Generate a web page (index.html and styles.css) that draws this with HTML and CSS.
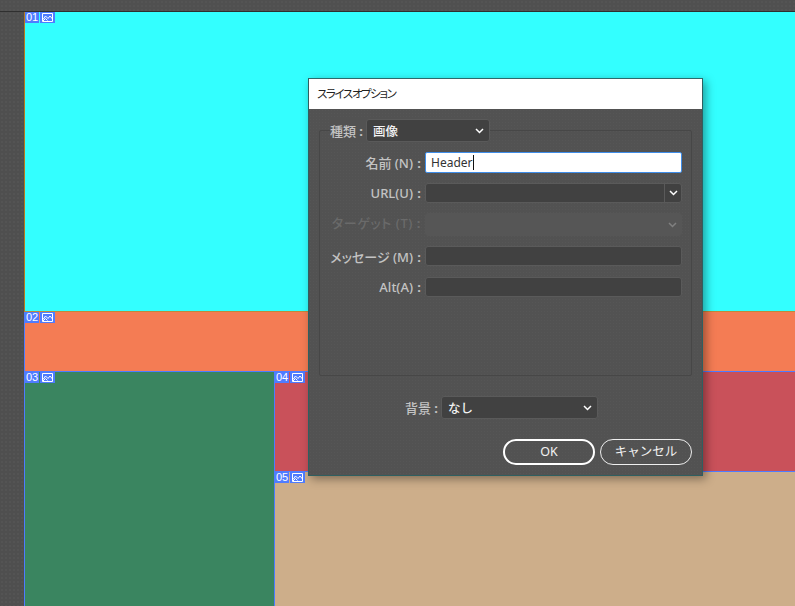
FILE: index.html
```html
<!DOCTYPE html>
<html lang="ja">
<head>
<meta charset="utf-8">
<title>スライスオプション</title>
<link rel="stylesheet" href="styles.css">
</head>
<body>
<svg class="defs" width="0" height="0" aria-hidden="true">
  <symbol id="pic" viewBox="0 0 11 9">
    <path d="M.5.5h10v8H.5z M1 6.5 3.5 3 6 5.5 8 3l2.500 3 M1 8 3.500 5.500 5.500 7.500" fill="none" stroke="#fff" stroke-width="1"/>
  </symbol>
  <symbol id="chev" viewBox="0 0 9 6">
    <path d="M1 1l3.500 3.500L8 1" fill="none" stroke="#fff" stroke-width="1.500"/>
  </symbol>
</svg>
<div class="topbar"></div>
<div class="workspace">
  <div class="gutter"></div>
  <div class="canvas">
    <section class="slice s1 selected">
      <div class="tag"><span class="num">01</span><span class="ico"><svg width="11" height="9"><use href="#pic"/></svg></span></div>
    </section>
    <section class="slice s2">
      <div class="tag"><span class="num">02</span><span class="ico"><svg width="11" height="9"><use href="#pic"/></svg></span></div>
    </section>
    <div class="lower">
      <section class="slice s3">
        <div class="tag"><span class="num">03</span><span class="ico"><svg width="11" height="9"><use href="#pic"/></svg></span></div>
      </section>
      <div class="rightcol">
        <section class="slice s4">
          <div class="tag"><span class="num">04</span><span class="ico"><svg width="11" height="9"><use href="#pic"/></svg></span></div>
        </section>
        <section class="slice s5">
          <div class="tag"><span class="num">05</span><span class="ico"><svg width="11" height="9"><use href="#pic"/></svg></span></div>
        </section>
      </div>
    </div>
  </div>
</div>

<div class="dialog">
  <div class="titlebar">スライスオプション</div>
  <div class="dialog-body">
    <fieldset class="group">
      <legend class="legend">
        <span class="label">種類<b class="colon">:</b></span>
        <span class="select select-type"><span>画像</span><svg width="9" height="6"><use href="#chev"/></svg></span>
      </legend>
      <div class="rows">
        <div class="row r-name"><span class="label">名前 (N)<b class="colon">:</b></span><span class="field focus">Header<i class="caret"></i></span></div>
        <div class="row r-url"><span class="label">URL(U)<b class="colon">:</b></span><span class="field combo"><span class="combo-main"></span><span class="combo-btn"><svg width="9" height="6"><use href="#chev"/></svg></span></span></div>
        <div class="row r-target"><span class="label off">ターゲット (T)<b class="colon">:</b></span><span class="field disabled"><svg width="9" height="6"><use href="#chev"/></svg></span></div>
        <div class="row r-msg"><span class="label">メッセージ (M)<b class="colon">:</b></span><span class="field"></span></div>
        <div class="row r-alt"><span class="label">Alt(A)<b class="colon">:</b></span><span class="field"></span></div>
      </div>
    </fieldset>
    <div class="bg-row">
      <span class="label">背景<b class="colon">:</b></span>
      <span class="select select-bg"><span>なし</span><svg width="9" height="6"><use href="#chev"/></svg></span>
    </div>
    <div class="actions">
      <button class="btn primary">OK</button>
      <button class="btn">キャンセル</button>
    </div>
  </div>
</div>
</body>
</html>
```

FILE: styles.css
```css
* { box-sizing: border-box; }
html, body { margin: 0; height: 100%; }
body {
  overflow: hidden;
  position: relative;
  background: #505050;
  font-family: "Noto Sans", "Noto Sans CJK JP", sans-serif;
}
.defs { position: absolute; }
.topbar {
  height: 12px;
  background-color: #505050;
  background-image: radial-gradient(#545454 0.7px, transparent 0.8px);
  background-size: 4px 4px;
  border-bottom: 1px solid #2f2f2f;
}
.workspace { display: flex; height: 594px; }
.gutter {
  width: 24px;
  flex: none;
  background-color: #4f4f4f;
  background-image: radial-gradient(#545454 0.7px, transparent 0.8px);
  background-size: 4px 4px;
}
.canvas { flex: 1; display: flex; flex-direction: column; }
.slice { position: relative; border-left: 1px solid #4f7cff; }
.s1 { height: 300px; background: #33ffff; border-left-color: #b5791f; border-bottom: 1px solid #c08a3a; }
.s2 { height: 60px; background: #f47c54; border-left-color: #4f7cff; border-bottom: 1px solid #4f7cff; }
.lower { flex: 1; display: flex; }
.s3 { width: 251px; background: #3a8560; border-right: 1px solid #4f7cff; }
.rightcol { flex: 1; display: flex; flex-direction: column; }
.s4 { height: 100px; background: #c9515a; border-left: 0; border-bottom: 1px solid #4f7cff; }
.s5 { flex: 1; background: #cdae8a; border-left: 0; }
.tag { display: flex; gap: 1px; height: 11px; }
.num, .ico {
  background: #4f7cff;
  color: #fff;
  height: 11px;
  display: flex;
  align-items: center;
  justify-content: center;
}
.num { width: 14px; font: 11px/11px "Liberation Sans", sans-serif; }
.ico { width: 15px; }
.ico svg { display: block; }

.dialog {
  position: absolute;
  left: 308px;
  top: 78px;
  width: 395px;
  height: 398px;
  border: 1px solid #2f5f60;
  border-top-color: #2c6a6b;
  background-color: #525252;
  background-image: radial-gradient(#565656 0.6px, transparent 0.7px);
  background-size: 3px 3px;
  box-shadow: 3px 3px 9px rgba(0, 0, 0, .38);
}
.titlebar {
  height: 30px;
  background: #fff;
  color: #222;
  font-size: 11.500px;
  line-height: 29px;
  padding-left: 8px;
  font-feature-settings: "palt";
  letter-spacing: -1.400px;
}
.dialog-body { padding: 10px 10px 0; }
.group {
  margin: 0;
  padding: 0 0 0 5px;
  height: 257px;
  width: 373px;
  border: 1px solid #474747;
  border-radius: 2px;
}
.legend {
  display: flex;
  align-items: center;
  padding: 0;
  margin-left: 5px;
  height: 23px;
  background: #525252;
}
.label {
  color: #c3c3c3;
  font-size: 13px;
  font-weight: 500;
  white-space: nowrap;
  font-feature-settings: "palt";
}
.label.off { color: #6a6a6a; letter-spacing: .6px; }
.colon {
  display: inline-block;
  width: 10px;
  text-align: center;
  font-weight: 700;
}
.select {
  display: flex;
  align-items: center;
  justify-content: space-between;
  height: 23px;
  padding: 0 5px 0 6px;
  background: #414141;
  border: 1px solid #5a5a5a;
  border-radius: 3px;
  color: #f2f2f2;
  font-size: 12.500px;
  font-weight: 500;
}
.select-type { width: 124px; }
.rows { display: flex; flex-direction: column; padding-top: 10px; }
.row { display: flex; align-items: center; justify-content: flex-end; width: 357px; }
.row .colon { width: 12px; }
.field {
  display: flex;
  align-items: center;
  width: 257px;
  height: 20px;
  background: #414141;
  border: 1px solid #5a5a5a;
  border-radius: 3px;
  flex: none;
}
.r-url, .r-target, .r-msg { margin-top: 10px; }
.r-alt { margin-top: 11px; }
.r-target { align-items: flex-start; }
.r-target .label { line-height: 21px; }
.focus {
  height: 21px;
  background: #fff;
  border: 1px solid #3f8de8;
  border-radius: 2px;
  color: #333;
  font-size: 12px;
  padding-left: 5px;
}
.caret { display: block; width: 1px; height: 15px; background: #111; }
.combo { overflow: hidden; }
.combo-main { flex: 1; height: 100%; }
.combo-btn {
  width: 17px;
  height: 100%;
  border-left: 1px solid #5a5a5a;
  display: flex;
  align-items: center;
  justify-content: center;
}
.disabled {
  height: 23px;
  background: #565656;
  border-color: #565656;
  justify-content: flex-end;
  padding-right: 4px;
}
.disabled svg { opacity: .25; }
.bg-row { display: flex; align-items: center; padding-left: 86px; margin-top: 20px; }
.select-bg { width: 157px; height: 23px; }
.actions { display: flex; justify-content: flex-end; gap: 5px; margin-top: 20px; }
.btn {
  width: 92px;
  height: 26px;
  padding: 0;
  background: transparent;
  border: 1px solid #eee;
  border-radius: 13px;
  color: #f2f2f2;
  font: 400 12.500px/1 "Noto Sans", "Noto Sans CJK JP", sans-serif;
}
.btn.primary { border: 2px solid #fff; }
```
